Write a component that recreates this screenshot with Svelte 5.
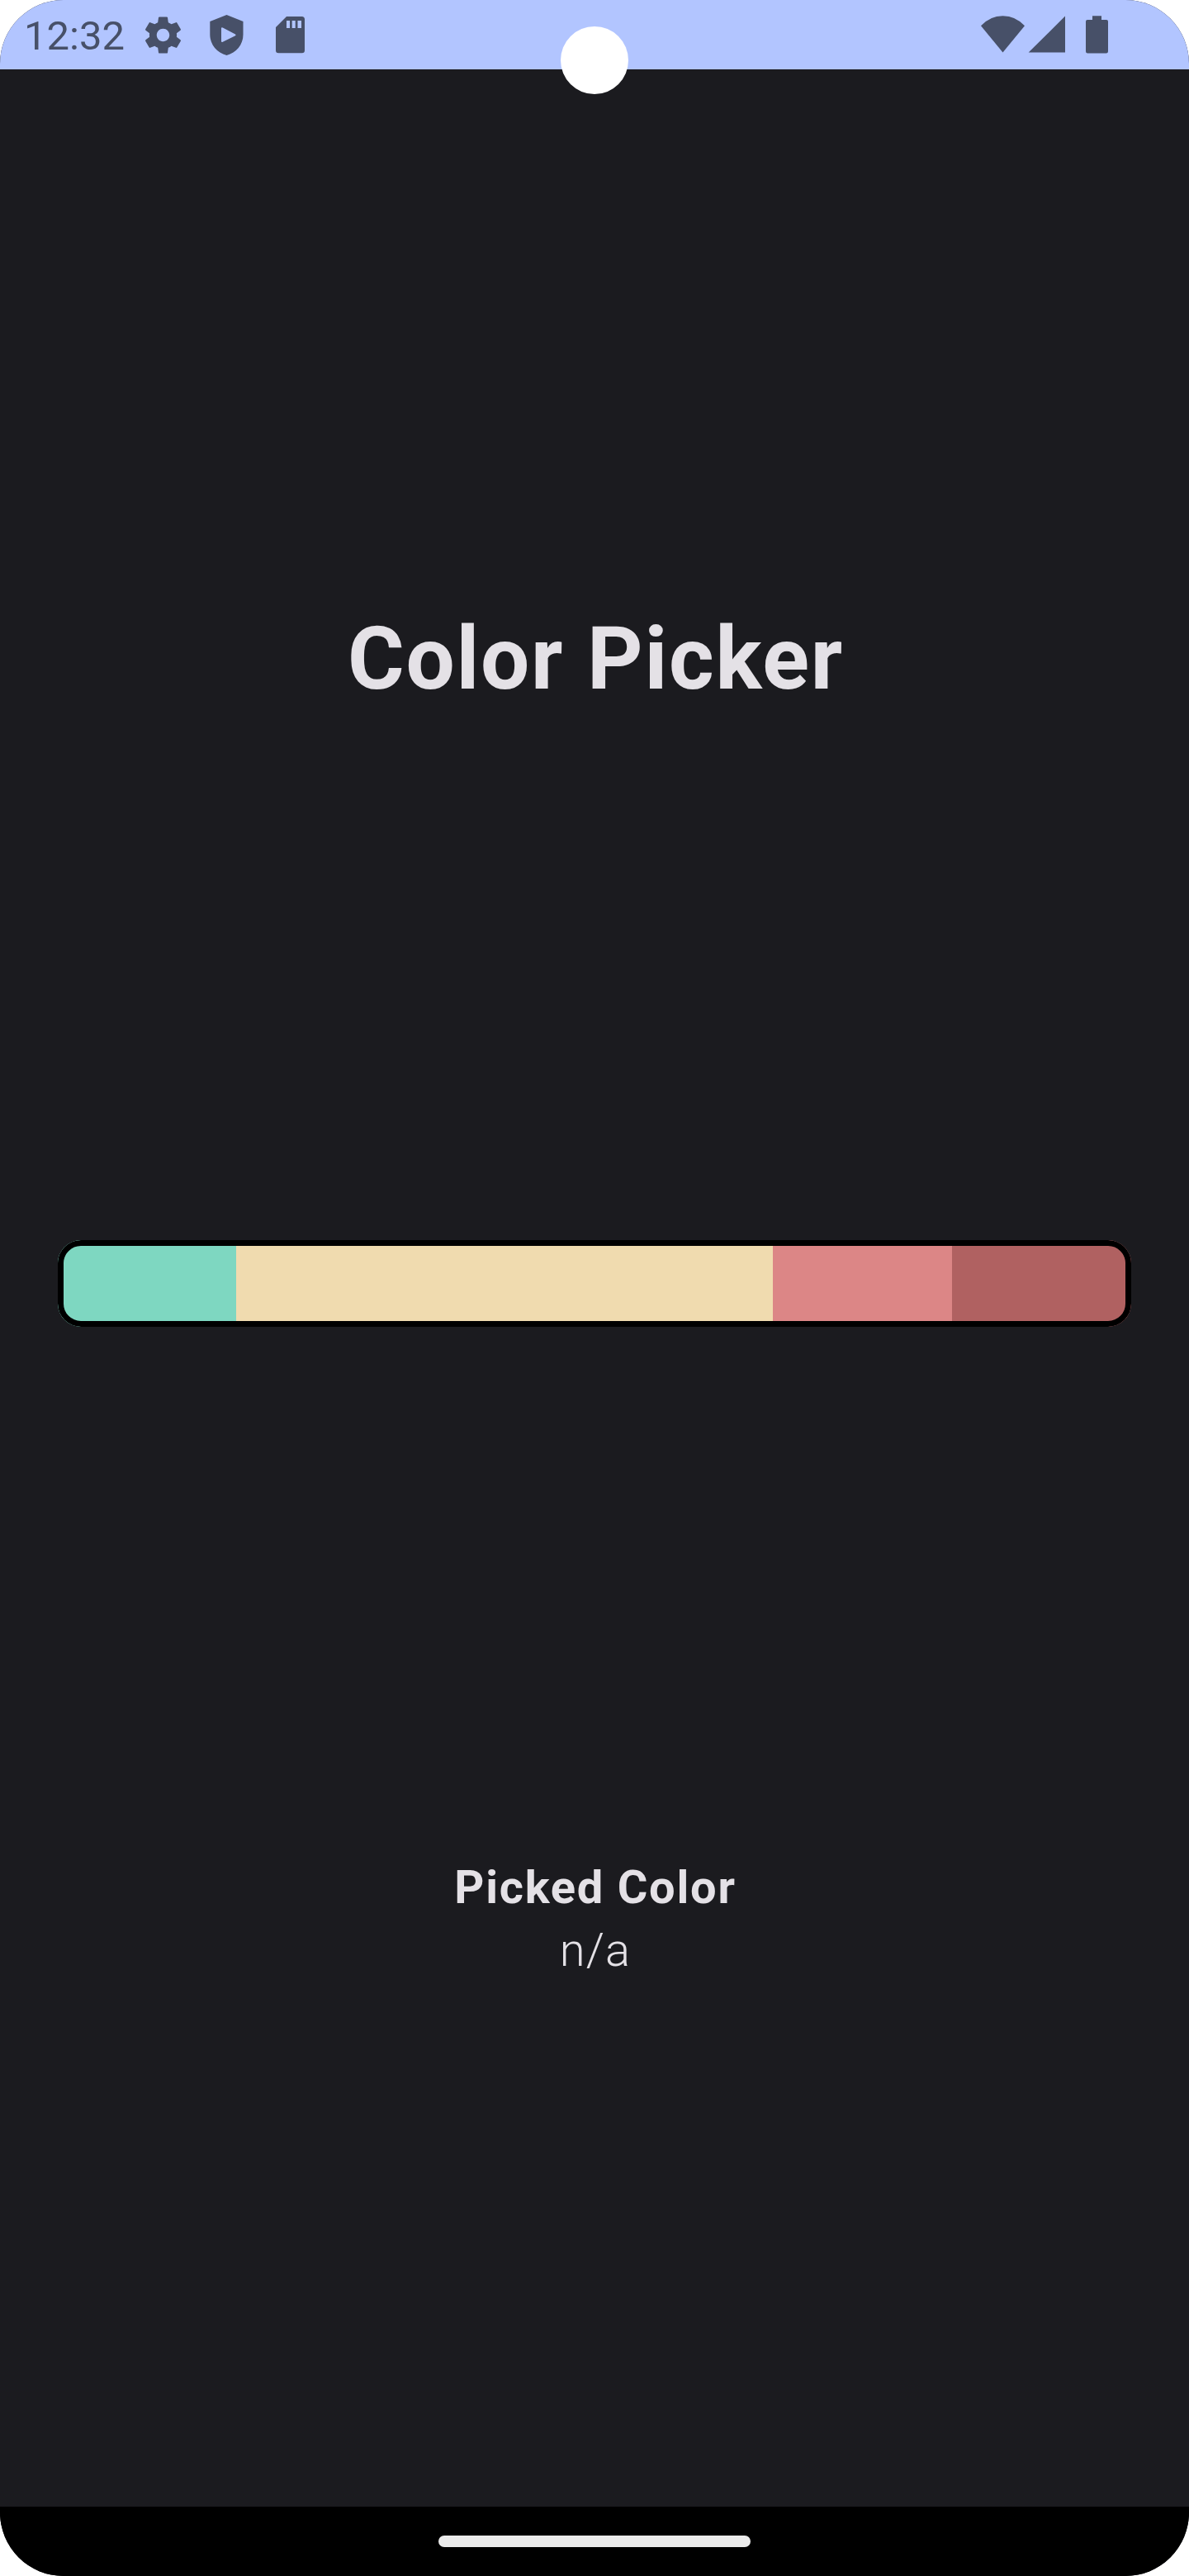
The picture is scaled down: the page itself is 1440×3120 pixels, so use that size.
<script>
  const swatches = ['#7ed7c1', '#f0dbaf', '#dc8686', '#b06161'];
  let picked = $state('n/a');
</script>

<div class="screen">
  <header class="status">
    <span class="time">12:32</span>
    <svg class="gear" viewBox="0 0 24 24" aria-hidden="true">
      <path fill-rule="evenodd" d="M19.43 12.98c.04-.32.07-.64.07-.98s-.03-.66-.07-.98l2.11-1.65c.19-.15.24-.42.12-.64l-2-3.46c-.12-.22-.39-.3-.61-.22l-2.49 1c-.52-.4-1.08-.73-1.69-.98l-.38-2.65C14.46 2.18 14.25 2 14 2h-4c-.25 0-.46.18-.49.42l-.38 2.65c-.61.25-1.17.59-1.69.98l-2.49-1c-.23-.09-.49 0-.61.22l-2 3.46c-.13.22-.07.49.12.64l2.11 1.65c-.04.32-.07.65-.07.98s.03.66.07.98l-2.11 1.65c-.19.15-.24.42-.12.64l2 3.46c.12.22.39.3.61.22l2.49-1c.52.4 1.08.73 1.69.98l.38 2.65c.03.24.24.42.49.42h4c.25 0 .46-.18.49-.42l.38-2.65c.61-.25 1.17-.59 1.69-.98l2.49 1c.23.09.49 0 .61-.22l2-3.46c.12-.22.07-.49-.12-.64l-2.11-1.65zM12 15.5c-1.93 0-3.5-1.57-3.5-3.5s1.57-3.5 3.5-3.5 3.5 1.57 3.5 3.5-1.57 3.5-3.5 3.5z" />
    </svg>
    <svg class="shield" viewBox="0 0 42 84" aria-hidden="true">
      <path fill-rule="evenodd" d="M20.5 18L40.5 26V42C40.5 54 32 64 20.5 67C9 64 .3 54 .3 42V26ZM14 34.4V49.8Q14 51.6 15.8 50.8L31 43.2Q32.4 42.3 31 41.4L15.8 33.4Q14 32.6 14 34.4Z" />
    </svg>
    <svg class="card" viewBox="0 0 36 84" aria-hidden="true">
      <path fill-rule="evenodd" d="M13 20H31.5Q35 20 35 23.5V61Q35 64.3 31.7 64.3H3.3Q0 64.3 0 61V33ZM13 25V34H17V25ZM19.7 25V34H23.7V25ZM26.5 25V34H31V25Z" />
    </svg>
    <span class="spacer"></span>
    <svg class="wifi" viewBox="0 0 53 84" aria-hidden="true">
      <path d="M0 31.3Q11 19.2 26.5 19.2Q42 19.2 53 31.3L26.5 63.4Z" />
    </svg>
    <svg class="signal" viewBox="0 0 45 84" aria-hidden="true">
      <path d="M-.3 63.6L44 19.5V63.6Z" />
    </svg>
    <svg class="battery" viewBox="0 0 27 84" aria-hidden="true">
      <path d="M8 19.2H19V24H25Q27 24 27 26V62.3Q27 64.5 24.8 64.5H2.2Q0 64.5 0 62.3V26Q0 24 2 24H8Z" />
    </svg>
    <span class="camera"></span>
  </header>

  <main>
    <h1>Color Picker</h1>
    <div class="bar">
      {#each swatches as color}
        <button aria-label={color} style:background={color} onclick={() => (picked = color)}></button>
      {/each}
    </div>
    <section>
      <h2>Picked Color</h2>
      <p>{picked}</p>
    </section>
  </main>

  <footer><span class="handle"></span></footer>
</div>

<style>
  :global(body) {
    margin: 0;
    background: #fff;
  }
  .screen {
    position: relative;
    display: flex;
    flex-direction: column;
    width: 1440px;
    height: 3120px;
    border-radius: 77px;
    overflow: hidden;
    background: #1b1b1f;
    color: #e4e1e6;
    font-family: Roboto, sans-serif;
  }
  .status {
    display: flex;
    align-items: center;
    box-sizing: border-box;
    height: 84px;
    padding: 0 98px 0 29px;
    background: #b2c5ff;
    color: #475068;
  }
  .status svg {
    flex: none;
    height: 84px;
    fill: currentColor;
    overflow: visible;
  }
  .time {
    width: 142px;
    font-size: 49px;
    line-height: 84px;
    padding-top: 2px;
    box-sizing: border-box;
    height: 84px;
    white-space: nowrap;
  }
  .spacer {
    flex: 1;
  }
  .status .gear {
    width: 53px;
    height: 53px;
  }
  .shield {
    width: 42px;
    margin-left: 30px;
  }
  .card {
    width: 36px;
    margin-left: 38px;
  }
  .wifi {
    width: 53px;
  }
  .signal {
    width: 45px;
    margin-left: 5px;
  }
  .battery {
    width: 27px;
    margin-left: 24px;
  }
  .camera {
    position: absolute;
    top: 32px;
    left: 679px;
    width: 82px;
    height: 82px;
    border-radius: 50%;
    background: #fff;
  }
  main {
    flex: 1;
    display: flex;
    flex-direction: column;
    align-items: center;
  }
  h1 {
    margin: 653px 0 0;
    padding-left: 3px;
    height: 123px;
    font-size: 105px;
    line-height: 123px;
    font-weight: 700;
    letter-spacing: 1.75px;
  }
  .bar {
    position: relative;
    display: grid;
    grid-template-columns: 216px 650px 217px 217px;
    width: 1300px;
    height: 105px;
    margin-top: 642px;
    border-radius: 28px;
    overflow: hidden;
  }
  .bar::after {
    content: '';
    position: absolute;
    inset: 0;
    border: 7px solid #000;
    border-radius: 28px;
    pointer-events: none;
  }
  button {
    border: 0;
    padding: 0;
  }
  section {
    margin-top: 641px;
    padding-left: 2px;
    text-align: center;
    font-size: 56px;
    line-height: 76px;
    letter-spacing: 1.75px;
  }
  h2,
  p {
    margin: 0;
    font-size: inherit;
  }
  h2 {
    font-weight: 700;
  }
  p {
    font-weight: 300;
    letter-spacing: 1.2px;
  }
  footer {
    display: flex;
    justify-content: center;
    align-items: center;
    height: 84px;
    background: #000;
  }
  .handle {
    width: 378px;
    height: 14px;
    border-radius: 7px;
    background: #ebebeb;
  }
</style>
